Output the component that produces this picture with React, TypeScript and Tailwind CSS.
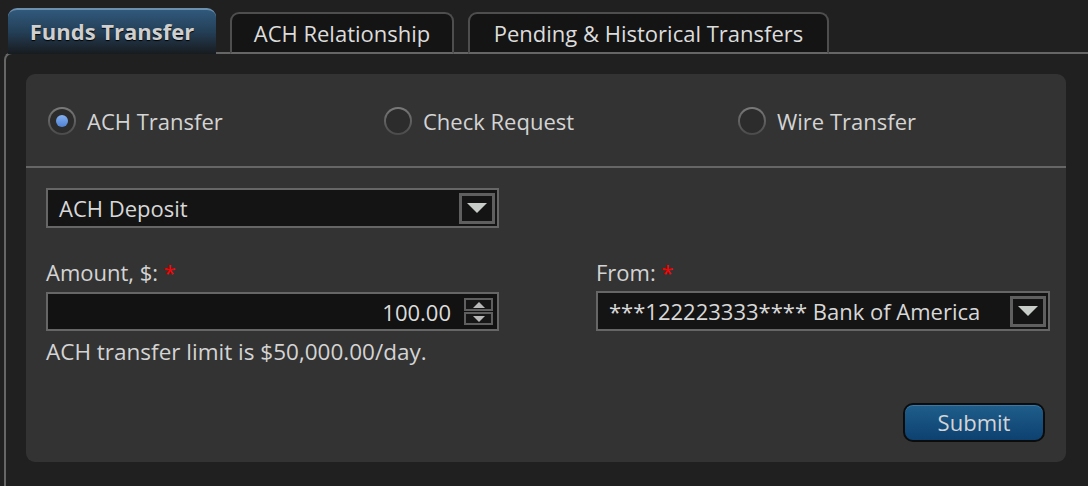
import { useState } from 'react';

type Method = 'ach' | 'check' | 'wire';

function Radio({ checked, label, onClick, width }: { checked: boolean; label: string; onClick: () => void; width: string }) {
  return (
    <button onClick={onClick} className={`flex items-center gap-[11px] ${width}`}>
      <span className="flex h-[28px] w-[28px] items-center justify-center rounded-full bg-gradient-to-b from-[#7a7a7a] to-[#4a4a4a] p-[2px]">
        <span className="flex h-full w-full items-center justify-center rounded-full bg-[#2c2c2c]">
          {checked && <span className="h-[12px] w-[12px] rounded-full bg-gradient-to-b from-[#86b0f0] to-[#4f82d4]" />}
        </span>
      </span>
      <span className="text-[22px] leading-none text-[#d4d4d4]">{label}</span>
    </button>
  );
}

function Arrow() {
  return (
    <span className="flex h-[31px] w-[36px] items-center justify-center border-[3px] border-[#5f5f5f] bg-[#141414]">
      <svg width="20" height="10" viewBox="0 0 20 10">
        <path d="M0 0 L20 0 L10 10 Z" fill="#c8ccc8" />
      </svg>
    </span>
  );
}

function Select({ value, width }: { value: string; width: string }) {
  return (
    <div className={`flex h-[40px] ${width} items-center justify-between border-2 border-[#666] bg-[#141414] pl-[11px] pr-[2px]`}>
      <span className="text-[22px] leading-none text-[#d8d8d8]">{value}</span>
      <Arrow />
    </div>
  );
}

function Spinner() {
  return (
    <span className="flex flex-col gap-[1px]">
      <span className="flex h-[13px] w-[29px] items-center justify-center border-2 border-[#5f5f5f] bg-[#161616]">
        <svg width="12" height="6" viewBox="0 0 12 6"><path d="M0 6 L12 6 L6 0 Z" fill="#b8b8b8" /></svg>
      </span>
      <span className="flex h-[13px] w-[29px] items-center justify-center border-2 border-[#5f5f5f] bg-[#161616]">
        <svg width="12" height="6" viewBox="0 0 12 6"><path d="M0 0 L12 0 L6 6 Z" fill="#b8b8b8" /></svg>
      </span>
    </span>
  );
}

export default function App() {
  const [tab, setTab] = useState(0);
  const [method, setMethod] = useState<Method>('ach');
  const tabs = [
    { label: 'Funds Transfer', w: 'w-[208px]' },
    { label: 'ACH Relationship', w: 'w-[224px]' },
    { label: 'Pending & Historical Transfers', w: 'w-[361px]' },
  ];

  return (
    <div className="h-[486px] overflow-hidden bg-[#202020] font-['Open_Sans',sans-serif] text-[#d4d4d4]">
      {/* tabs */}
      <div className="relative z-10 flex h-[54px] items-end gap-[14px] pl-[8px] pt-[8px]">
        {tabs.map((t, i) =>
          i === tab ? (
            <button
              key={t.label}
              onClick={() => setTab(i)}
              className={`flex h-[46px] ${t.w} items-center justify-center rounded-t-[9px] border-t-2 border-[#6d8fae] bg-gradient-to-b from-[#30597c] via-[#243f57] to-[#171b1f] pb-[2px] text-[22px] font-bold text-[#cfcfcf] [text-shadow:0_1px_1px_#000]`}
            >
              {t.label}
            </button>
          ) : (
            <button
              key={t.label}
              onClick={() => setTab(i)}
              className={`flex h-[42px] ${t.w} items-center justify-center rounded-t-[9px] border-2 border-[#4e4e4e] border-b-[#666] bg-[#141414] text-[22px] text-[#dcdcdc]`}
            >
              {t.label}
            </button>
          ),
        )}
      </div>

      {/* panel */}
      <div className="-mt-[2px] ml-[4px] h-[434px] rounded-tl-[8px] border-l-2 border-t-2 border-[#666] px-[20px] pt-[20px]">
        <div className="h-[388px] w-[1040px] rounded-[9px] bg-[#333]">
          <div className="flex h-[92px] items-center pl-[22px] pt-[2px]">
            <Radio width="w-[336px]" label="ACH Transfer" checked={method === 'ach'} onClick={() => setMethod('ach')} />
            <Radio width="w-[354px]" label="Check Request" checked={method === 'check'} onClick={() => setMethod('check')} />
            <Radio width="w-[200px]" label="Wire Transfer" checked={method === 'wire'} onClick={() => setMethod('wire')} />
          </div>
          <div className="h-[2px] bg-[#666]" />

          <div className="px-[20px] pt-[20px]">
            <Select value="ACH Deposit" width="w-[453px]" />

            <div className="mt-[28px] grid grid-cols-[453px_454px] gap-x-[97px]">
              <div>
                <div className="h-[32px] text-[22px] leading-[32px]">
                  Amount, $: <span className="text-[#ff0000]">*</span>
                </div>
                <div className="mt-[4px] flex h-[39px] items-center justify-end gap-[13px] border-2 border-[#666] bg-[#121212] pr-[4px]">
                  <span className="text-[22px] leading-none text-[#dcdcdc]">100.00</span>
                  <Spinner />
                </div>
                <div className="mt-[6px] text-[22.5px] leading-[30px]">ACH transfer limit is $50,000.00/day.</div>
              </div>
              <div>
                <div className="h-[32px] text-[22px] leading-[32px]">
                  From: <span className="text-[#ff0000]">*</span>
                </div>
                <div className="mt-[3px]">
                  <Select value="***122223333**** Bank of America" width="w-[454px]" />
                </div>
              </div>
            </div>

            <div className="mt-[36px] flex justify-end pr-[1px]">
              <button className="flex h-[39px] w-[142px] items-center justify-center rounded-[10px] border-2 border-[#0c0c0c] bg-gradient-to-b from-[#1f5e8c] to-[#0d4170] text-[22px] text-[#d4d4d4] shadow-[inset_0_1px_0_#3a78a6]">
                Submit
              </button>
            </div>
          </div>
        </div>
      </div>
    </div>
  );
}
